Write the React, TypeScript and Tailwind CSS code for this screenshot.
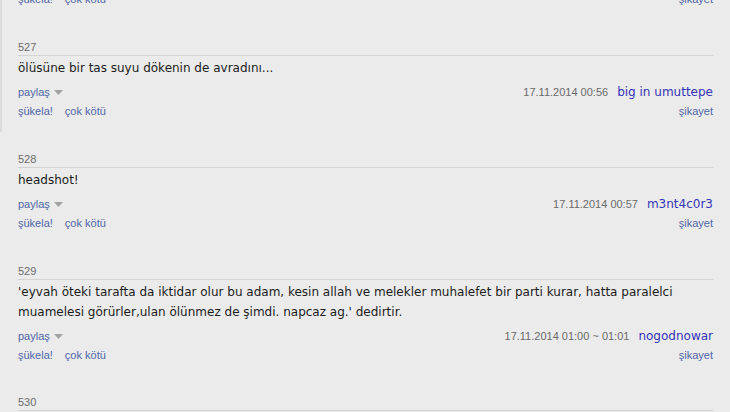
import React from 'react';

interface EntryData {
  id: number;
  content: string;
  date: string;
  author: string;
}

const entries: EntryData[] = [
  { id: 527, content: 'ölüsüne bir tas suyu dökenin de avradını...', date: '17.11.2014 00:56', author: 'big in umuttepe' },
  { id: 528, content: 'headshot!', date: '17.11.2014 00:57', author: 'm3nt4c0r3' },
  {
    id: 529,
    content:
      "'eyvah öteki tarafta da iktidar olur bu adam, kesin allah ve melekler muhalefet bir parti kurar, hatta paralelci muamelesi görürler,ulan ölünmez de şimdi. napcaz ag.' dedirtir.",
    date: '17.11.2014 01:00 ~ 01:01',
    author: 'nogodnowar',
  },
];

const big = { fontFamily: '"DejaVu Sans", Verdana, sans-serif' };

const VoteRow = () => (
  <div className="flex items-center justify-between h-[14px] leading-[14px] text-[11px] text-[#4f66a8]">
    <div className="flex gap-[12px]">
      <span>şükela!</span>
      <span>çok kötü</span>
    </div>
    <span>şikayet</span>
  </div>
);

const Entry = ({ entry }: { entry: EntryData }) => (
  <div className="pt-[20px] pb-[14px]">
    <div className="h-[16px] leading-[15px] text-[11px] text-[#6b6b6b] border-b border-[#d4d4d4]">{entry.id}</div>
    <div className="mt-[2px] text-[12px] leading-[20px] text-[#1c1c1c]" style={big}>
      {entry.content}
    </div>
    <div className="mt-[4px] flex items-center justify-between h-[20px]">
      <div className="flex items-center gap-[4px] text-[11px] text-[#4f66a8]">
        <span>paylaş</span>
        <svg width="9" height="6" viewBox="0 0 9 6" className="mt-[1px]">
          <path d="M0 0 L9 0 L4.5 5 Z" fill="#a3a3a3" />
        </svg>
      </div>
      <div className="flex items-center gap-[9px]">
        <span className="text-[11px] text-[#6a6a6a]">{entry.date}</span>
        <span className="text-[12px] text-[#3333b8]" style={big}>
          {entry.author}
        </span>
      </div>
    </div>
    <div className="mt-[2px]">
      <VoteRow />
    </div>
  </div>
);

export default function App() {
  return (
    <div
      className="w-[730px] h-[412px] overflow-hidden bg-[#ebebeb] pl-[18px] pr-[17px] pt-px"
      style={{ fontFamily: '"Liberation Sans", Arial, sans-serif' }}
    >
      <div className="-ml-[18px] -mt-px pl-[16px] border-l-2 border-[#dcdcdc]">
        <div className="-mt-[9px] pb-[14px]">
          <VoteRow />
        </div>
        <Entry entry={entries[0]} />
      </div>
      {entries.slice(1).map((e) => (
        <Entry key={e.id} entry={e} />
      ))}
      <div className="pt-[19px]">
        <div className="h-[16px] leading-[15px] text-[11px] text-[#6b6b6b] border-b border-[#d4d4d4]">530</div>
      </div>
    </div>
  );
}
